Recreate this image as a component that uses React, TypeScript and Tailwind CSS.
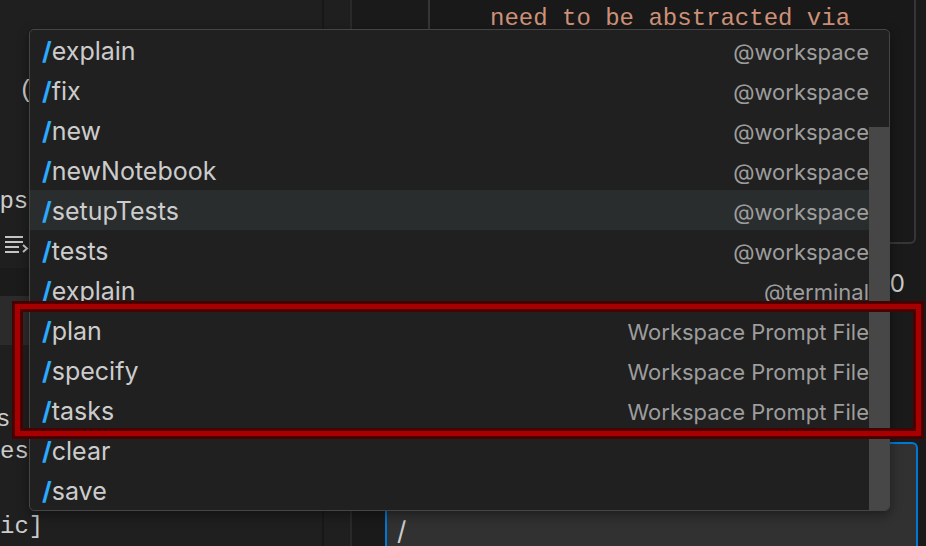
import React from "react";

type Item = { name: string; desc: string; active?: boolean };

const items: Item[] = [
  { name: "explain", desc: "@workspace" },
  { name: "fix", desc: "@workspace" },
  { name: "new", desc: "@workspace" },
  { name: "newNotebook", desc: "@workspace" },
  { name: "setupTests", desc: "@workspace", active: true },
  { name: "tests", desc: "@workspace" },
  { name: "explain", desc: "@terminal" },
  { name: "plan", desc: "Workspace Prompt File" },
  { name: "specify", desc: "Workspace Prompt File" },
  { name: "tasks", desc: "Workspace Prompt File" },
  { name: "clear", desc: "" },
  { name: "save", desc: "" },
];

const mono = "font-['Liberation_Mono',monospace] text-[24px]";

const WrapIcon = () => (
  <svg width="26" height="22" viewBox="0 0 26 22" fill="none" stroke="#c5c5c5" strokeWidth="2">
    <path d="M2 3h18M2 8h18M2 13h14M2 18h14" />
    <path d="M20 11l4 3.5-4 3.5" />
  </svg>
);

const CommandRow = ({ item }: { item: Item }) => (
  <div
    className={`flex h-[40px] items-center justify-between pl-[12px] pr-[20px] pt-[4px] ${
      item.active ? "bg-[#2a2d2e]" : ""
    }`}
  >
    <span className="text-[25px] text-[#cccccc]">
      <span className="font-bold text-[#2aaaff]">/</span>
      {item.name}
    </span>
    <span className="text-[22px] text-[#9d9d9d]">{item.desc}</span>
  </div>
);

export default function App() {
  return (
    <div className="relative flex h-[546px] w-[926px] overflow-hidden bg-[#1f1f1f] font-['Inter','Noto_Sans',sans-serif]">
      {/* left editor column */}
      <div className={`flex w-[322px] flex-col text-[#cccccc] ${mono}`}>
        <div className="h-[71px]" />
        <div className="flex h-[40px] items-center pl-[19px]">(</div>
        <div className="h-[71px]" />
        <div className="flex h-[40px] items-center ml-[-15px]">eps</div>
        <div className="flex h-[46px] items-center pl-[3px]">
          <WrapIcon />
        </div>
        <div className="h-[28px] bg-[#1b1b1b]" />
        <div className="h-[49px] bg-[#2b2b2b]" />
        <div className="h-[59px]" />
        <div className="flex h-[32px] items-center ml-[-4px]">st</div>
        <div className="flex h-[32px] items-center">es</div>
        <div className="h-[43px]" />
        <div className="flex h-[32px] items-center">ic]</div>
      </div>

      <div className="w-[2px] bg-[#181818]" />
      <div className="w-[26px]" />
      <div className="w-[2px] bg-[#2a2a2a]" />

      {/* chat panel */}
      <div className="flex flex-1 flex-col bg-[#1a1a1a]">
        <div className="ml-[76px] h-[245px] w-[488px] rounded-br-md border-x-2 border-b-2 border-[#363636] bg-[#191919] pl-[60px] pt-[4px]">
          <div className={`leading-[30px] text-[#ce9178] ${mono}`}>need to be abstracted via</div>
        </div>
        <div className="mt-[20px] flex h-[40px] items-center justify-end pr-[21px] text-[24px] text-[#cccccc]">0</div>
        <div className="mt-[138px] ml-[33px] flex-1 w-[533px] rounded-t-md border-x-2 border-t-2 border-[#0078d4] bg-[#313131] pl-[10px]">
          <div className="mt-[72px] text-[26px] leading-[30px] text-[#cccccc]">/</div>
        </div>
      </div>

      {/* suggestion popup */}
      <div className="absolute left-[29px] top-[29px] w-[861px] overflow-hidden rounded-[5px] border border-[#454545] bg-[#202020] shadow-[0_4px_12px_rgba(0,0,0,0.4)]">
        {items.map((item, i) => (
          <CommandRow key={i} item={item} />
        ))}
        <div className="absolute bottom-0 right-0 top-[97px] w-[20px] bg-[#474747]" />
      </div>

      {/* annotation */}
      <div className="absolute left-[15px] top-[304px] h-[132px] w-[906px] border-[5px] border-[#a80000] shadow-[0_0_0_3px_#4a0000,inset_0_0_0_3px_#4a0000]" />
    </div>
  );
}
